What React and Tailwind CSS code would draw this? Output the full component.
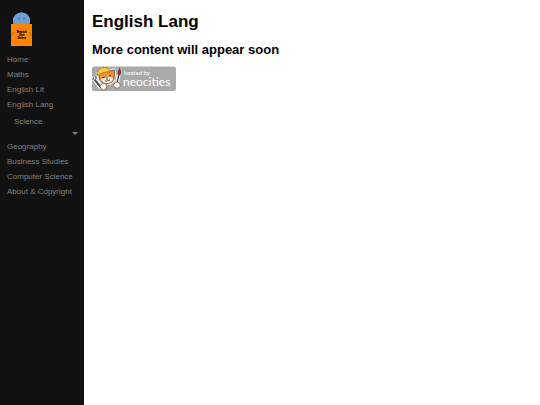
const linksBefore = ["Home", "Maths", "English Lit", "English Lang"];
const linksAfter = ["Geography", "Business Studies", "Computer Science", "About & Copyright"];

function SiteLogo() {
  return (
    <svg viewBox="0 0 28 38" className="w-7 h-[38px]" role="img" aria-label="Site logo">
      <circle cx="13.5" cy="11" r="8.7" fill="#6f9fd8" />
      <ellipse cx="11" cy="8.5" rx="0.7" ry="1.2" fill="#3d6da8" />
      <ellipse cx="16" cy="8.5" rx="0.7" ry="1.2" fill="#3d6da8" />
      <rect x="3" y="14" width="21" height="22" fill="#ff8500" />
      <path d="M3.5 25.5 L5.5 22 M23.5 25.5 L21.5 22" stroke="#8f6a3c" strokeWidth="0.9" />
      <g fill="#1c0e00" fontFamily="Liberation Sans, sans-serif" fontWeight="bold" fontSize="3" textAnchor="middle" stroke="#1c0e00" strokeWidth="0.2">
        <text x="13.7" y="23">Revisit</text>
        <text x="13.7" y="26">Dot</text>
        <text x="13.7" y="29">Notes</text>
      </g>
    </svg>
  );
}

function NeocitiesBadge() {
  return (
    <svg viewBox="0 0 84 26" className="block w-[84px] h-[26px]" role="img" aria-label="Hosted by Neocities">
      <rect x="0" y="0.5" width="84" height="24.5" rx="2.5" fill="#a9a9a9" />
      {/* white sticker edge */}
      <path d="M4 7 Q7 0 14 0.5 L18 3 L23 2.5 L24 8 L23 15 L18 19 L9 18 L5 13 Z" fill="#fff" />
      {/* cat head and ears */}
      <path d="M7 9 Q7 15 10 16.5 Q15 19 19.5 16.5 Q23 14 22.5 9 L22.3 3.8 L17 5.5 L10 6 Z" fill="#f28f38" stroke="#4a3426" strokeWidth="0.7" />
      <path d="M9 13.5 Q11 10.5 14 12.5 Q18 9 21 12.5 Q20 17 15 17.2 Q10.5 17 9 13.5 Z" fill="#fff6e6" />
      <path d="M10.5 11.7 L12.5 11 M17 10 L19 9.3 M13 14.8 Q14.5 16 15.3 14.3 Q17 15.3 18 13.7" fill="none" stroke="#35261f" strokeWidth="0.9" />
      <circle cx="15" cy="13" r="0.8" fill="#35261f" />
      {/* hard hat */}
      <path d="M5 9 Q4.5 3 10 1.7 Q16 0 18.5 5.5 Q12 6 5 9 Z" fill="#f9c93c" stroke="#6b4a20" strokeWidth="0.7" />
      <path d="M4.5 9.7 Q11 6.3 19.5 6" fill="none" stroke="#d9902c" strokeWidth="1.2" />
      {/* wrench and brush */}
      <path d="M2 12.5 L8.5 21" stroke="#fff" strokeWidth="4.4" strokeLinecap="round" />
      <path d="M2.5 13.5 L9 21.5" stroke="#555" strokeWidth="2" />
      <path d="M1 14 L1.3 11.3 M4.3 13 L3.6 10.7" stroke="#555" strokeWidth="1.3" />
      <path d="M25 18 L27.5 4" stroke="#fff" strokeWidth="3.8" strokeLinecap="round" />
      <path d="M25 17 L26.8 9" stroke="#493a3e" strokeWidth="1.3" />
      <path d="M25.8 8.7 Q25 5 27.6 1.8 Q29.8 5.5 28 9 Z" fill="#a52d3a" stroke="#4a2025" strokeWidth="0.5" />
      {/* paws */}
      <circle cx="11.5" cy="20.6" r="3.3" fill="#fff" stroke="#604a3d" strokeWidth="0.7" />
      <circle cx="25" cy="19.3" r="3.2" fill="#fff" stroke="#604a3d" strokeWidth="0.7" />
      <path d="M9.5 22.7 Q11.5 24.3 13.7 22.5 M23.2 21.4 Q25 23 27.2 21" fill="none" stroke="#f39a3f" strokeWidth="0.9" />
      <text x="32" y="9" fill="#fff" fontFamily="Lato, sans-serif" fontSize="6">hosted by</text>
      <text x="31" y="20" fill="#fff" fontFamily="Lato, sans-serif" fontSize="12">neocities</text>
    </svg>
  );
}

function NavLink({ children }) {
  return (
    <a href="#" className="block pl-[7px] whitespace-nowrap hover:text-gray-100">
      {children}
    </a>
  );
}

export default function App() {
  return (
    <div className="flex min-h-screen bg-white font-['Liberation_Sans',Arial,sans-serif]">
      <nav className="w-[84px] shrink-0 bg-[#111111] pt-2.5 text-[8px] leading-[15px] text-[#818181]">
        <a href="#" className="block pl-2 pb-1">
          <SiteLogo />
        </a>

        {linksBefore.map((label) => (
          <NavLink key={label}>{label}</NavLink>
        ))}

        <button type="button" className="block w-full pt-0.5 pb-1 pl-3.5 pr-1.5 text-left hover:text-gray-100">
          Science
          <svg viewBox="0 0 6 3" className="ml-auto mt-[3px] w-1.5 h-[3px]" aria-hidden="true">
            <path d="M0 0 H6 L3 3 Z" fill="currentColor" />
          </svg>
        </button>

        {linksAfter.map((label) => (
          <NavLink key={label}>{label}</NavLink>
        ))}
      </nav>

      <main className="flex-1 px-2 pt-3 text-black">
        <h1 className="text-[17px] leading-5 font-bold">English Lang</h1>
        <h2 className="mt-2.5 text-[13px] leading-4 font-bold">More content will appear soon</h2>
        <a href="#" className="mt-2 inline-block">
          <NeocitiesBadge />
        </a>
      </main>
    </div>
  );
}
